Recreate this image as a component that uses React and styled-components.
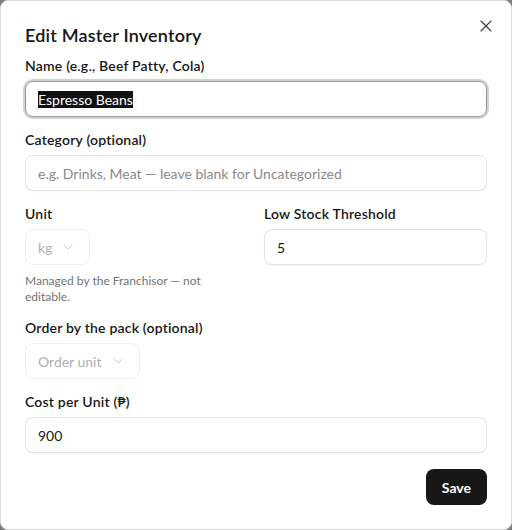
import React, { useEffect, useRef } from 'react';
import styled, { createGlobalStyle } from 'styled-components';
import { X, ChevronDown } from 'lucide-react';

const GlobalStyle = createGlobalStyle`
  * { box-sizing: border-box; }
  html, body {
    margin: 0;
    padding: 0;
    background: #7d7d7d;
    font-family: Lato, "Noto Sans", sans-serif;
    color: #171717;
  }
`;

const Dialog = styled.div`
  position: relative;
  width: 512px;
  height: 530px;
  background: #fff;
  border: 1px solid #dcdcdc;
  border-radius: 8px;
  padding: 20px 24px 24px 24px;
  display: flex;
  flex-direction: column;
`;

const CloseButton = styled.button`
  position: absolute;
  top: 15px;
  right: 15px;
  width: 20px;
  height: 20px;
  padding: 0;
  border: none;
  background: transparent;
  color: #3f3f3f;
  display: flex;
  align-items: center;
  justify-content: center;
  cursor: pointer;
`;

const Title = styled.h2`
  margin: 0 0 7px 0;
  font-size: 18px;
  line-height: 28px;
  font-weight: 600;
  letter-spacing: 0.2px;
`;

const Form = styled.div`
  display: flex;
  flex-direction: column;
  gap: 13px;
`;

const Field = styled.div`
  display: flex;
  flex-direction: column;
  gap: 5px;
  min-width: 0;
`;

const Label = styled.label`
  font-size: 14px;
  line-height: 20px;
  font-weight: 600;
  letter-spacing: 0.2px;
`;

const Row = styled.div`
  display: grid;
  grid-template-columns: 1fr 1fr;
  gap: 16px;
`;

const Input = styled.input`
  width: 100%;
  height: 36px;
  padding: 0 12px;
  font: inherit;
  font-size: 14px;
  color: #171717;
  background: #fff;
  border: 1px solid #e5e5e5;
  border-radius: 8px;
  box-shadow: 0 1px 2px rgba(0, 0, 0, 0.04);
  outline: none;

  &::placeholder {
    color: #8a8a8a;
  }

  &:focus {
    border-color: #9a9a9a;
    box-shadow: 0 0 0 2px #d2d2d2;
  }

  &::selection {
    background: #111;
    color: #fff;
  }
`;

const Select = styled.div`
  display: inline-flex;
  align-items: center;
  gap: 8px;
  align-self: flex-start;
  height: 36px;
  padding: 0 13px 0 12px;
  font-size: 14px;
  color: #b0b0b0;
  border: 1px solid #efefef;
  border-radius: 8px;
  background: #fff;
  white-space: nowrap;

  svg {
    flex: none;
    color: #c4c4c4;
  }
`;

const Hint = styled.p`
  margin: 3px 0 0 0;
  font-size: 12px;
  line-height: 16px;
  color: #737373;
  max-width: 205px;
`;

const Footer = styled.div`
  display: flex;
  justify-content: flex-end;
  margin-top: 16px;
`;

const SaveButton = styled.button`
  height: 36px;
  padding: 0 16px;
  border: none;
  border-radius: 8px;
  background: #171717;
  color: #fff;
  font: inherit;
  font-size: 14px;
  font-weight: 700;
  cursor: pointer;
`;

export default function App() {
  const nameRef = useRef(null);

  useEffect(() => {
    if (nameRef.current) {
      nameRef.current.focus();
      nameRef.current.select();
    }
  }, []);

  return (
    <>
      <GlobalStyle />
      <Dialog>
        <CloseButton aria-label="Close">
          <X size={20} strokeWidth={1.4} />
        </CloseButton>
        <Title>Edit Master Inventory</Title>
        <Form>
          <Field>
            <Label>Name (e.g., Beef Patty, Cola)</Label>
            <Input ref={nameRef} defaultValue="Espresso Beans" />
          </Field>
          <Field>
            <Label>Category (optional)</Label>
            <Input placeholder="e.g. Drinks, Meat — leave blank for Uncategorized" />
          </Field>
          <Row>
            <Field>
              <Label>Unit</Label>
              <Select>
                <span>kg</span>
                <ChevronDown size={16} strokeWidth={1.3} />
              </Select>
              <Hint>Managed by the Franchisor — not editable.</Hint>
            </Field>
            <Field>
              <Label>Low Stock Threshold</Label>
              <Input defaultValue="5" />
            </Field>
          </Row>
          <Field>
            <Label>Order by the pack (optional)</Label>
            <Select>
              <span>Order unit</span>
              <ChevronDown size={16} strokeWidth={1.3} />
            </Select>
          </Field>
          <Field>
            <Label>Cost per Unit (₱)</Label>
            <Input defaultValue="900" />
          </Field>
        </Form>
        <Footer>
          <SaveButton>Save</SaveButton>
        </Footer>
      </Dialog>
    </>
  );
}
